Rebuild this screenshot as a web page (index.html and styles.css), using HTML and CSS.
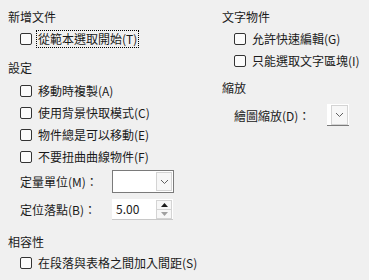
FILE: index.html
```html
<!DOCTYPE html>
<html lang="zh-Hant">
<head>
  <meta charset="UTF-8">
  <title>選項</title>
  <link rel="stylesheet" href="styles.css">
</head>
<body>
  <div class="page">

    <!-- 左欄 -->
    <div class="col col-left">
      <div class="heading">新增文件</div>
      <div class="row"><span class="box"></span><span class="label focus">從範本選取開始(T)</span></div>

      <div class="heading gap-settings">設定</div>
      <div class="row"><span class="box"></span><span class="label">移動時複製(A)</span></div>
      <div class="row"><span class="box"></span><span class="label">使用背景快取模式(C)</span></div>
      <div class="row"><span class="box"></span><span class="label">物件總是可以移動(E)</span></div>
      <div class="row"><span class="box"></span><span class="label">不要扭曲曲線物件(F)</span></div>

      <div class="field field-unit">
        <span class="field-label">定量單位(M)：</span>
        <div class="combo">
          <div class="combo-btn">
            <svg width="9" height="6" viewBox="0 0 9 6"><path d="M1 1 L4.5 4.5 L8 1" fill="none" stroke="#606060" stroke-width="1"/></svg>
          </div>
        </div>
      </div>

      <div class="field field-snap">
        <span class="field-label">定位落點(B)：</span>
        <div class="spin">
          <span class="spin-value">5.00</span>
          <div class="spin-btns">
            <div class="spin-up"><svg width="7" height="4" viewBox="0 0 7 4"><path d="M0 4 L3.5 0 L7 4 Z" fill="#1a1a1a"/></svg></div>
            <div class="spin-down"><svg width="7" height="4" viewBox="0 0 7 4"><path d="M0 0 L3.5 4 L7 0 Z" fill="#a0a0a0"/></svg></div>
          </div>
        </div>
      </div>

      <div class="heading gap-compat">相容性</div>
      <div class="row"><span class="box"></span><span class="label">在段落與表格之間加入間距(S)</span></div>
    </div>

    <!-- 右欄 -->
    <div class="col col-right">
      <div class="heading">文字物件</div>
      <div class="row"><span class="box"></span><span class="label">允許快速編輯(G)</span></div>
      <div class="row"><span class="box"></span><span class="label">只能選取文字區塊(I)</span></div>

      <div class="heading gap-zoom">縮放</div>
      <div class="field field-zoom">
        <span class="field-label">繪圖縮放(D)：</span>
        <div class="combo combo-small">
          <div class="combo-btn">
            <svg width="9" height="6" viewBox="0 0 9 6"><path d="M1 1 L4.5 4.5 L8 1" fill="none" stroke="#606060" stroke-width="1"/></svg>
          </div>
        </div>
      </div>
    </div>

  </div>
</body>
</html>
```

FILE: styles.css
```css
* { margin:0; padding:0; box-sizing:border-box; }
html, body { width:369px; height:280px; overflow:hidden; }
body { background:#f0f0f0; color:#1a1a1a; font-family:"Noto Sans CJK TC", "Noto Sans", sans-serif; font-size:12px; }

.page { display:flex; padding-top:7px; }
.col { display:flex; flex-direction:column; }
.col-left { width:222px; padding-left:8px; }
.col-right { padding-left:0; }

/* 標題 */
.heading { height:20px; line-height:20px; margin-bottom:1px; }
.gap-settings { margin-top:8px; margin-bottom:2px; }
.gap-compat { margin-top:12px; margin-bottom:0; }
.gap-zoom { margin-top:6px; margin-bottom:0; }

/* 核取方塊列 */
.row { display:flex; align-items:center; height:22px; padding-left:12px; }
.box { width:12px; height:12px; border:1px solid #333; border-radius:2px; background:#fbfbfb; flex-shrink:0; }
.label { margin-left:5px; padding:0 1px; line-height:16px; white-space:nowrap; }
.focus { outline:1px dotted #000; outline-offset:0; }

/* 欄位 */
.field { display:flex; align-items:center; padding-left:12px; }
.field-label { white-space:nowrap; }
.field-unit { height:23px; margin-top:2px; }
.field-unit .field-label { width:92px; }
.field-snap { height:21px; margin-top:6px; }
.field-snap .field-label { width:92px; }
.field-zoom { height:22px; margin-top:6px; }
.field-zoom .field-label { width:93px; }

.combo { width:62px; height:23px; border:1px solid #7a7a7a; background:#fff; display:flex; justify-content:flex-end; align-items:center; padding-right:1px; }
.combo-btn { width:16px; height:19px; border:1px solid #d4d4d4; background:#f7f7f7; display:flex; align-items:center; justify-content:center; }
.combo-small { width:22px; height:22px; border:none; border-bottom:1px solid #7a7a7a; padding-right:1px; }
.combo-small .combo-btn { width:17px; height:20px; }

.spin { width:61px; height:21px; background:#fff; border-bottom:1px solid #c8c8c8; display:flex; align-items:center; justify-content:space-between; padding-left:4px; padding-right:1px; }
.spin-value { line-height:16px; }
.spin-btns { display:flex; flex-direction:column; gap:0; }
.spin-up, .spin-down { width:16px; height:10px; border:1px solid #d4d4d4; background:#f7f7f7; display:flex; align-items:center; justify-content:center; }
.spin-down { margin-top:-1px; }
```
